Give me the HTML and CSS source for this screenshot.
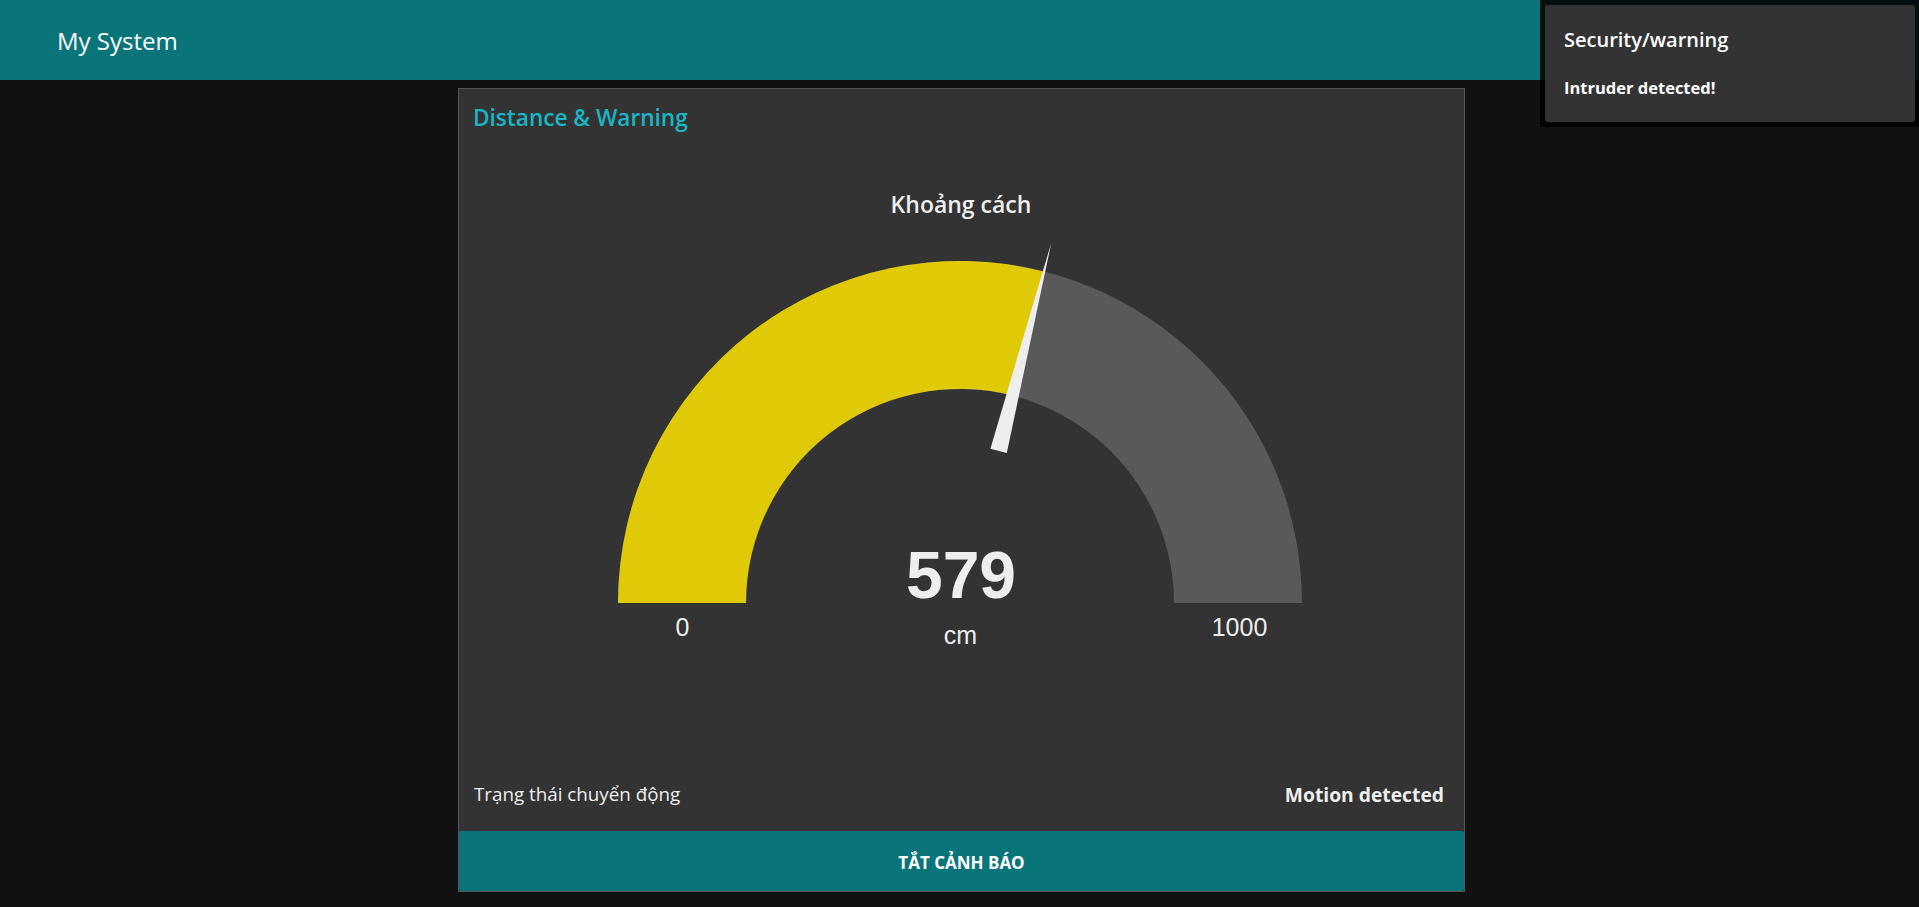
FILE: index.html
```html
<!DOCTYPE html>
<html lang="vi">
<head>
<meta charset="utf-8">
<title>My System</title>
<link rel="stylesheet" href="styles.css">
</head>
<body>
<header class="topbar">
  <div class="app-title">My System</div>
</header>
<main class="layout">
  <section class="card">
    <div class="card-title">Distance &amp; Warning</div>
    <svg class="gauge" width="1005" height="621" viewBox="459 139 1005 621" xmlns="http://www.w3.org/2000/svg">
      <text class="g-title" x="961" y="213" text-anchor="middle">Khoảng cách</text>
      <path class="g-back" d="M 618 603 A 342 342 0 0 1 1302 603 L 1174 603 A 214 214 0 0 0 746 603 Z"/>
      <path class="g-level" d="M 618 603 A 342 342 0 0 1 1044.0 271.5 L 1012.6 395.5 A 214 214 0 0 0 746 603 Z"/>
      <polygon class="g-needle" points="1051.4,242.4 1006.8,452.9 990.4,448.7"/>
      <text class="g-value" x="961" y="598" text-anchor="middle">579</text>
      <text class="g-label" x="682.5" y="636" text-anchor="middle">0</text>
      <text class="g-label" x="1239.5" y="636" text-anchor="middle">1000</text>
      <text class="g-label" x="960.5" y="644" text-anchor="middle">cm</text>
    </svg>
    <div class="status-row">
      <span class="status-label">Trạng thái chuyển động</span>
      <span class="status-value">Motion detected</span>
    </div>
    <button class="action-btn">TẮT CẢNH BÁO</button>
  </section>
</main>
<div class="toast">
  <div class="toast-inner">
    <div class="toast-title">Security/warning</div>
    <div class="toast-msg">Intruder detected!</div>
  </div>
</div>
</body>
</html>
```
FILE: styles.css
```css
html, body {
  margin: 0;
  padding: 0;
}
body {
  background: #111111;
  font-family: "Open Sans", "Noto Sans", sans-serif;
  color: #eeeeee;
  width: 1919px;
  height: 907px;
  overflow: hidden;
}
.topbar {
  height: 80px;
  background: #097479;
  display: flex;
  align-items: center;
  padding-left: 57px;
  padding-top: 0;
  box-sizing: border-box;
}
.app-title {
  font-size: 24px;
  color: #ffffff;
}
.layout {
  display: flex;
  justify-content: center;
  padding-top: 8px;
  padding-left: 4px;
}
.card {
  width: 1007px;
  height: 804px;
  box-sizing: border-box;
  border: 1px solid #555555;
  background: #333333;
  display: flex;
  flex-direction: column;
}
.card-title {
  height: 50px;
  box-sizing: border-box;
  padding: 14px 0 0 14px;
  font-size: 22.6px;
  line-height: 30px;
  font-weight: 600;
  color: #1ab5c5;
}
.gauge {
  display: block;
  width: 1005px;
  height: 621px;
}
.g-title {
  font-family: "Open Sans", sans-serif;
  font-weight: 600;
  font-size: 23px;
  fill: #eeeeee;
}
.g-back { fill: #595959; }
.g-level { fill: #e0ca08; }
.g-needle { fill: #eeeeee; }
.g-value {
  font-family: "Liberation Sans", Arial, sans-serif;
  font-weight: 700;
  font-size: 66px;
  fill: #eeeeee;
}
.g-label {
  font-family: "Liberation Sans", Arial, sans-serif;
  font-size: 25px;
  fill: #eeeeee;
}
.status-row {
  height: 71px;
  box-sizing: border-box;
  padding: 22px 20px 0 15px;
  display: flex;
  justify-content: space-between;
  font-size: 18.8px;
  line-height: 25px;
  color: #eeeeee;
}
.status-value {
  font-weight: 700;
  font-size: 19.3px;
}
.action-btn {
  height: 60px;
  width: 100%;
  border: none;
  margin: 0;
  padding: 2px 0 0 0;
  background: #097479;
  color: #ffffff;
  font-family: "Open Sans", sans-serif;
  font-weight: 700;
  font-size: 17px;
  display: flex;
  align-items: center;
  justify-content: center;
  border-radius: 2px;
}
.toast {
  position: fixed;
  top: 0;
  right: 0;
  width: 379px;
  height: 127px;
  box-sizing: border-box;
  padding: 5px 4px 5px 5px;
  background: rgba(0, 0, 0, 0.85);
}
.toast-inner {
  height: 117px;
  box-sizing: border-box;
  background: #333333;
  border-radius: 3px;
  padding: 22px 0 0 19px;
  color: #ffffff;
}
.toast-title {
  font-size: 20px;
  line-height: 26px;
  font-weight: 600;
}
.toast-msg {
  margin-top: 24px;
  font-size: 16.5px;
  line-height: 22px;
  font-weight: 700;
}
```
